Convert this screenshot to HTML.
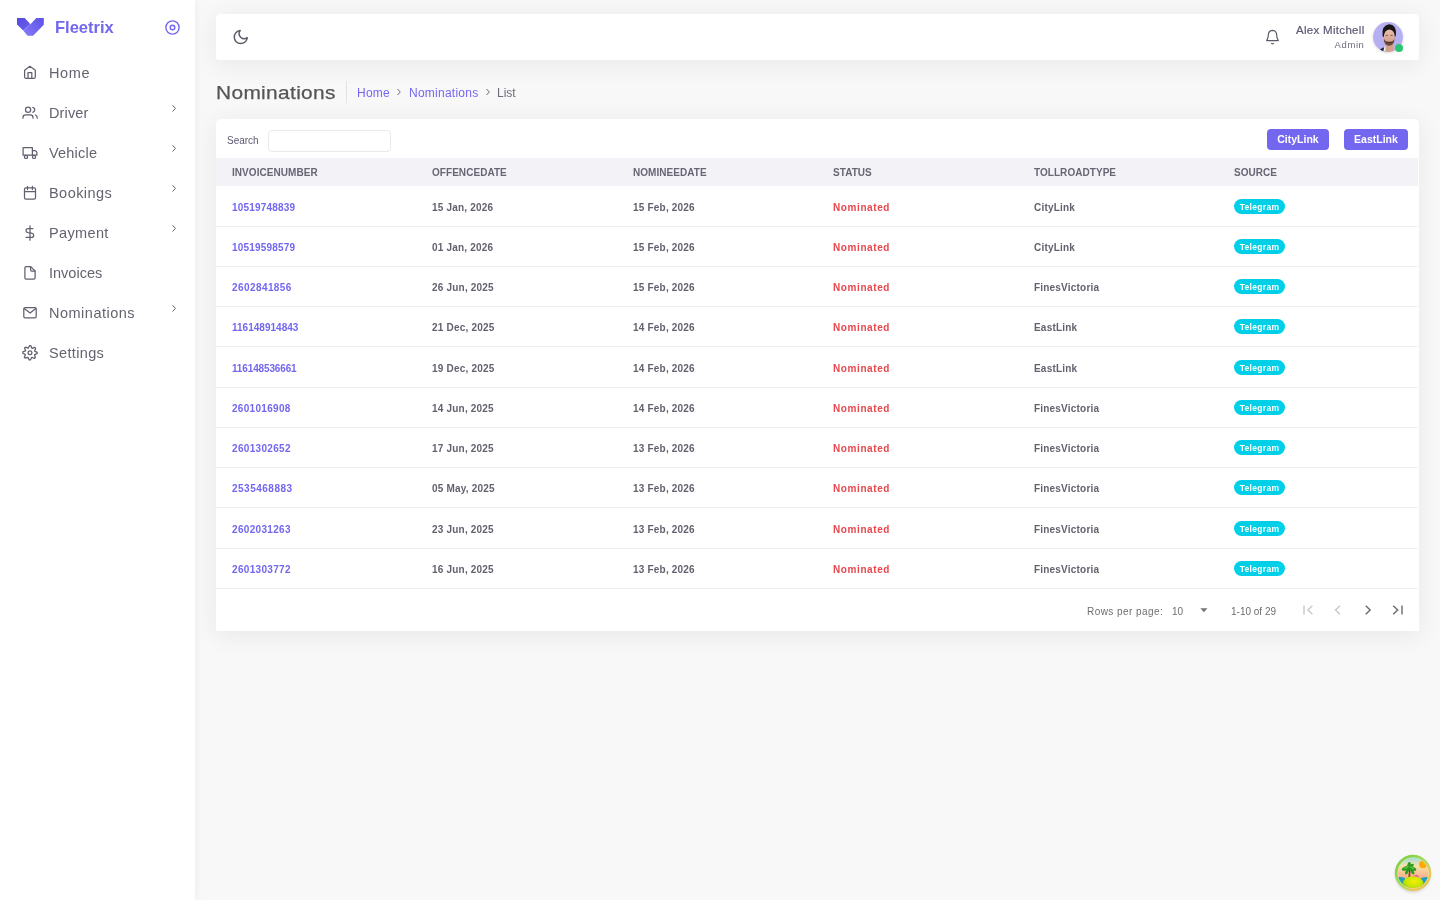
<!DOCTYPE html>
<html><head><meta charset="utf-8">
<style>
*{box-sizing:border-box;margin:0;padding:0}
html,body{width:1440px;height:900px;overflow:hidden}
html{-webkit-font-smoothing:antialiased}
body{will-change:transform}
body{font-family:"Liberation Sans",sans-serif;background:#f8f8f8;position:relative;color:#5e5873}
.abs{position:absolute}
#side{position:absolute;left:0;top:0;width:195px;height:900px;background:#fff;box-shadow:0 0 8px rgba(34,41,47,.06)}
.brand{position:absolute;left:55px;top:17.5px;font-size:16.5px;font-weight:bold;color:#7367f0;letter-spacing:0}
.nav{position:absolute;left:0;width:195px;height:40px}
.nav svg{position:absolute;left:22px;top:13px}
.nav span{position:absolute;left:49px;top:12.5px;font-size:14.5px;color:#66636f;letter-spacing:0.2px}
.nav i{position:absolute;left:171px;top:8px;width:5px;height:5px;border-right:1.2px solid #625f6e;border-top:1.2px solid #625f6e;transform:rotate(45deg)}
.card{position:absolute;background:#fff;border-radius:6px;box-shadow:0 4px 24px 0 rgba(34,41,47,.08)}
#hdr{left:216px;top:14px;width:1202.5px;height:46px;border-radius:5px 5px 3px 3px}
#tbl{left:216px;top:118.5px;width:1203px;height:512px;overflow:hidden;border-radius:5px 5px 0 0}
.title{position:absolute;left:216px;top:82px;font-size:19px;color:#555;letter-spacing:0.3px;-webkit-text-stroke:0.25px #555;transform:scaleX(1.1);transform-origin:0 0}
.vdiv{position:absolute;left:346px;top:81px;width:1px;height:22px;background:#e3e3e3}
.bc{position:absolute;top:86px;font-size:12px;color:#7367f0;letter-spacing:0.25px}
.bcs{position:absolute;top:86px;font-size:12px;color:#6e6b7b}
.srch{position:absolute;left:11px;top:16px;font-size:10px;color:#5e5873}
.inp{position:absolute;left:52px;top:11px;width:123px;height:22px;border:1px solid #eaeaee;border-radius:4px}
.th{position:absolute;top:39px;height:28px;left:0;width:1202px;background:#f3f2f7}
.th div{position:absolute;top:9.5px;font-size:10px;font-weight:bold;color:#686575;letter-spacing:0.05px}
.row{position:absolute;left:0;width:1202px;height:41px;border-bottom:1px solid #efeff1}
.row div{position:absolute;top:16.1px;font-size:10px;font-weight:bold;color:#64616f;letter-spacing:0.2px}
.row .inv{color:#7367f0}
.row .st{color:#e8484d;letter-spacing:0.6px}
.row .badge{top:13px;height:15px;width:51px;border-radius:8px;background:#00cfe8;color:#fff;font-size:8.5px;text-align:center;line-height:16.5px;letter-spacing:0.3px}
.btn{position:absolute;top:10.5px;height:21px;border-radius:4px;background:#7367f0;color:#fff;font-size:10.5px;font-weight:bold;text-align:center;line-height:21px}
.uname{position:absolute;right:54px;top:10px;font-size:11.5px;color:#5e5873;white-space:nowrap;letter-spacing:0.3px;-webkit-text-stroke:0.2px #5e5873}
.urole{position:absolute;right:54px;top:25px;font-size:9.5px;color:#6e6b7b;letter-spacing:0.6px}
.avatar{position:absolute;left:1157px;top:8px;width:30px;height:30px;border-radius:50%;box-shadow:0 1px 3px rgba(0,0,0,.15)}
.avatar svg{position:absolute;left:0;top:0}
.avatar i{position:absolute;left:22px;top:22px;width:8px;height:8px;border-radius:50%;background:#28c76f;border:0 solid #fff}
.ft{position:absolute;top:487px;font-size:10px;color:#6e6e6e}

</style></head><body>
<div id="side">
  <svg class="abs" style="left:0;top:0" width="50" height="40" viewBox="0 0 50 40">
    <defs><linearGradient id="lgL" x1="0" y1="0" x2="1" y2="1"><stop offset="0" stop-color="#5548e2"/><stop offset="1" stop-color="#6d61ea"/></linearGradient><linearGradient id="lgR" x1="0" y1="1" x2="1" y2="0"><stop offset="0" stop-color="#877bfa"/><stop offset="1" stop-color="#5d50e6"/></linearGradient></defs>
    <path d="M17 18H24.7L30.5 24.3L23.2 30.5L17 24.4Z" fill="url(#lgL)"/>
    <path d="M36.25 18H43.8V24.7L33.1 35.7H27.6L23.2 30.5L30.5 24.3Z" fill="url(#lgR)"/>
  </svg>
  <div class="brand">Fleetrix</div>
  <svg class="abs" style="left:165px;top:20px" width="15" height="15" viewBox="0 0 15 15"><circle cx="7.5" cy="7.5" r="6.6" fill="none" stroke="#7367f0" stroke-width="1.4"/><circle cx="7.5" cy="7.5" r="2.3" fill="none" stroke="#7367f0" stroke-width="1.4"/></svg>
<svg class="abs" style="left:0;top:0" width="195" height="400" viewBox="0 0 195 400" fill="none" stroke="#625f6e" stroke-width="1.25" stroke-linecap="round" stroke-linejoin="round">
<path d="M24.6 70.2L29.9 66.3L35.3 70.2V77.1Q35.3 78.3 34.1 78.3H25.8Q24.6 78.3 24.6 77.1Z"/><path d="M28 78.2V72.6H31.8V78.2"/>
<circle cx="28.1" cy="109.7" r="2.6"/><path d="M23 118.2V117.2Q23 114.9 25.6 114.9H30.4Q33 114.9 33 117.2V118.2"/><path d="M32.9 107.3Q34.8 108.1 34.8 109.8Q34.8 111.5 32.9 112.3"/><path d="M35.6 115Q37.3 115.9 37.3 118.2"/>
<path d="M23.1 147.5H32.4V155.2H23.1Z"/><path d="M32.4 150.6H35Q36.9 150.9 36.9 152.8V155.2H32.4"/><circle cx="26" cy="156.9" r="1.6" fill="#fff"/><circle cx="34" cy="156.9" r="1.6" fill="#fff"/>
<rect x="24.5" y="187.8" width="11" height="11.3" rx="1.4"/><path d="M27.5 186.4V189.5M32.4 186.4V189.5M24.5 191.5H35.5"/>
<path d="M32.9 228.6H28Q26 228.6 26 230.5Q26 232.4 28 232.7L31.6 233.1Q33.7 233.4 33.7 235.4Q33.7 237.4 31.6 237.4H26.1"/><path d="M30 225.8V240.2"/>
<path d="M30.6 266.6H26.1Q24.9 266.6 24.9 267.8V278Q24.9 279.1 26.1 279.1H33.9Q35.1 279.1 35.1 278V271Z"/><path d="M30.6 266.6V270.1Q30.6 271.1 31.6 271.1H35"/>
<rect x="23.8" y="307.6" width="12.4" height="10.3" rx="1.4"/><path d="M24.2 308.6L30.1 313.1L35.8 308.6"/>
<path d="M28.38 348.07 L29.57 345.61 L30.86 345.65 L31.90 348.18 L32.20 348.31 L34.78 347.41 L35.66 348.35 L34.61 350.87 L34.73 351.18 L37.19 352.37 L37.15 353.66 L34.62 354.70 L34.49 355.00 L35.39 357.58 L34.45 358.46 L31.93 357.41 L31.62 357.53 L30.43 359.99 L29.14 359.95 L28.10 357.42 L27.80 357.29 L25.22 358.19 L24.34 357.25 L25.39 354.73 L25.27 354.42 L22.81 353.23 L22.85 351.94 L25.38 350.90 L25.51 350.60 L24.61 348.02 L25.55 347.14 L28.07 348.19Z"/><circle cx="30" cy="352.7" r="1.9"/>
<path d="M172.8 105.6L175.5 108.4L172.8 111.2" stroke-width="1"/><path d="M172.8 145.6L175.5 148.4L172.8 151.2" stroke-width="1"/><path d="M172.8 185.6L175.5 188.4L172.8 191.2" stroke-width="1"/><path d="M172.8 225.6L175.5 228.4L172.8 231.2" stroke-width="1"/><path d="M172.8 305.6L175.5 308.4L172.8 311.2" stroke-width="1"/></svg><div class="nav" style="top:52px"><span style="letter-spacing:0.6px">Home</span></div>
<div class="nav" style="top:92px"><span style="letter-spacing:0.15px">Driver</span></div>
<div class="nav" style="top:132px"><span style="letter-spacing:0.2px">Vehicle</span></div>
<div class="nav" style="top:172px"><span style="letter-spacing:0.45px">Bookings</span></div>
<div class="nav" style="top:212px"><span style="letter-spacing:0.35px">Payment</span></div>
<div class="nav" style="top:252px"><span style="letter-spacing:0.0px">Invoices</span></div>
<div class="nav" style="top:292px"><span style="letter-spacing:0.5px">Nominations</span></div>
<div class="nav" style="top:332px"><span style="letter-spacing:0.35px">Settings</span></div>

</div>
<div class="card" id="hdr"><svg class="abs" style="left:0;top:0" width="60" height="46" viewBox="216 14 60 46" fill="none" stroke="#5d5a68" stroke-width="1.3" stroke-linecap="round" stroke-linejoin="round"><path transform="translate(232.05 28.4) scale(0.725)" stroke-width="2" d="M21 12.79A9 9 0 1 1 11.21 3 7 7 0 0 0 21 12.79z"/></svg>
<svg class="abs" style="left:1040px;top:0" width="80" height="46" viewBox="1256 14 80 46" fill="none" stroke="#5d5a68" stroke-width="1.2" stroke-linecap="round" stroke-linejoin="round"><path d="M1272.5 30.4Q1268.6 30.6 1268.3 35L1267.9 38L1266.7 40.6H1278.3L1277.1 38L1276.7 35Q1276.4 30.6 1272.5 30.4Z"/><path d="M1271.6 43.5Q1272.5 44.1 1273.4 43.5"/></svg>
<div class="uname">Alex Mitchell</div>
<div class="urole">Admin</div>
<div class="avatar"><svg width="30" height="30" viewBox="0 0 30 30"><defs><clipPath id="avc"><circle cx="15" cy="15" r="15"/></clipPath><linearGradient id="skin" x1="0" y1="0" x2="0" y2="1"><stop offset="0" stop-color="#ecc0ad"/><stop offset="1" stop-color="#cf9c86"/></linearGradient></defs><g clip-path="url(#avc)"><rect width="30" height="30" fill="#b6b0f3"/><path d="M3 31L8.5 26.5L11.5 25L12.5 31Z" fill="#1d2638"/><path d="M10 31L11.3 24.8L13.5 24L14 31Z" fill="#f2eeee"/><path d="M12.3 31L12.8 21.5H20L21.5 31Z" fill="#d4a28c"/><ellipse cx="16.2" cy="14.8" rx="5.6" ry="8.3" fill="url(#skin)"/><path d="M9.6 14Q8.2 3.5 16 2.2Q23.8 2.8 23 12.5L21.9 15.5Q21.8 8.2 16.4 7.6Q11.2 8 10.8 15.2Z" fill="#1a1514"/><path d="M10.8 16.5Q11 23.6 16.1 23.7Q21.2 23.6 21.6 16.5Q20.6 19.6 16.2 19.9Q11.8 19.6 10.8 16.5Z" fill="#6a4a3b"/><path d="M13.6 20.8Q16.2 19.6 18.8 20.8" stroke="#4a3028" stroke-width="1" fill="none"/><path d="M12.7 13.4H14.9M17.4 13.4H19.6" stroke="#6e5449" stroke-width="0.9"/></g></svg><i></i></div>
</div>
<div class="title">Nominations</div>
<div class="vdiv"></div>
<div class="bc" style="left:357px">Home</div>
<svg class="abs" style="left:396px;top:88px" width="6" height="8" viewBox="0 0 6 8"><path d="M1.5 1L4.3 4L1.5 7" fill="none" stroke="#6e6b7b" stroke-width="1"/></svg>
<div class="bc" style="left:409px">Nominations</div>
<svg class="abs" style="left:485px;top:88px" width="6" height="8" viewBox="0 0 6 8"><path d="M1.5 1L4.3 4L1.5 7" fill="none" stroke="#6e6b7b" stroke-width="1"/></svg>
<div class="bcs" style="left:497px">List</div>
<div class="card" id="tbl">
<div class="srch">Search</div><div class="inp"></div><div class="btn" style="left:1051px;width:62px">CityLink</div><div class="btn" style="left:1128px;width:64px">EastLink</div><div class="th"><div style="left:16px">INVOICENUMBER</div><div style="left:216px">OFFENCEDATE</div><div style="left:417px">NOMINEEDATE</div><div style="left:617px">STATUS</div><div style="left:818px">TOLLROADTYPE</div><div style="left:1018px">SOURCE</div></div>
<div class="row" style="top:67.0px"><div class="inv" style="left:16px;letter-spacing:0.2px">10519748839</div><div style="left:216px">15 Jan, 2026</div><div style="left:417px">15 Feb, 2026</div><div class="st" style="left:617px">Nominated</div><div style="left:818px">CityLink</div><div class="badge" style="left:1018px">Telegram</div></div>
<div class="row" style="top:107.25px"><div class="inv" style="left:16px;letter-spacing:0.2px">10519598579</div><div style="left:216px">01 Jan, 2026</div><div style="left:417px">15 Feb, 2026</div><div class="st" style="left:617px">Nominated</div><div style="left:818px">CityLink</div><div class="badge" style="left:1018px">Telegram</div></div>
<div class="row" style="top:147.5px"><div class="inv" style="left:16px;letter-spacing:0.42px">2602841856</div><div style="left:216px">26 Jun, 2025</div><div style="left:417px">15 Feb, 2026</div><div class="st" style="left:617px">Nominated</div><div style="left:818px">FinesVictoria</div><div class="badge" style="left:1018px">Telegram</div></div>
<div class="row" style="top:187.75px"><div class="inv" style="left:16px;letter-spacing:0.02px">116148914843</div><div style="left:216px">21 Dec, 2025</div><div style="left:417px">14 Feb, 2026</div><div class="st" style="left:617px">Nominated</div><div style="left:818px">EastLink</div><div class="badge" style="left:1018px">Telegram</div></div>
<div class="row" style="top:228.0px"><div class="inv" style="left:16px;letter-spacing:-0.14px">116148536661</div><div style="left:216px">19 Dec, 2025</div><div style="left:417px">14 Feb, 2026</div><div class="st" style="left:617px">Nominated</div><div style="left:818px">EastLink</div><div class="badge" style="left:1018px">Telegram</div></div>
<div class="row" style="top:268.25px"><div class="inv" style="left:16px;letter-spacing:0.3px">2601016908</div><div style="left:216px">14 Jun, 2025</div><div style="left:417px">14 Feb, 2026</div><div class="st" style="left:617px">Nominated</div><div style="left:818px">FinesVictoria</div><div class="badge" style="left:1018px">Telegram</div></div>
<div class="row" style="top:308.5px"><div class="inv" style="left:16px;letter-spacing:0.32px">2601302652</div><div style="left:216px">17 Jun, 2025</div><div style="left:417px">13 Feb, 2026</div><div class="st" style="left:617px">Nominated</div><div style="left:818px">FinesVictoria</div><div class="badge" style="left:1018px">Telegram</div></div>
<div class="row" style="top:348.75px"><div class="inv" style="left:16px;letter-spacing:0.5px">2535468883</div><div style="left:216px">05 May, 2025</div><div style="left:417px">13 Feb, 2026</div><div class="st" style="left:617px">Nominated</div><div style="left:818px">FinesVictoria</div><div class="badge" style="left:1018px">Telegram</div></div>
<div class="row" style="top:389.0px"><div class="inv" style="left:16px;letter-spacing:0.32px">2602031263</div><div style="left:216px">23 Jun, 2025</div><div style="left:417px">13 Feb, 2026</div><div class="st" style="left:617px">Nominated</div><div style="left:818px">FinesVictoria</div><div class="badge" style="left:1018px">Telegram</div></div>
<div class="row" style="top:429.25px"><div class="inv" style="left:16px;letter-spacing:0.32px">2601303772</div><div style="left:216px">16 Jun, 2025</div><div style="left:417px">13 Feb, 2026</div><div class="st" style="left:617px">Nominated</div><div style="left:818px">FinesVictoria</div><div class="badge" style="left:1018px">Telegram</div></div>
<div class="ft" style="left:871px;letter-spacing:0.45px">Rows per page:</div>
<div class="ft" style="left:956px">10</div>
<svg class="abs" style="left:984px;top:489px" width="8" height="5" viewBox="0 0 8 5"><path d="M0.3 0.3H7.5L3.9 4.2Z" fill="#757575"/></svg>
<div class="ft" style="left:1015px">1-10 of 29</div>
<svg class="abs" style="left:1080px;top:480px" width="122" height="22" viewBox="1296 599 122 22" fill="none" stroke-width="1.4" stroke-linecap="butt" stroke-linejoin="miter">
<path d="M1304 605.6V614.4" stroke="#c8c8c8"/><path d="M1312.4 605.8L1307.9 610L1312.4 614.2" stroke="#c8c8c8"/>
<path d="M1339.9 605.8L1335.5 610L1339.9 614.2" stroke="#c8c8c8"/>
<path d="M1365.7 605.8L1370.2 610L1365.7 614.2" stroke="#6a6a6a"/>
<path d="M1393.2 605.8L1397.7 610L1393.2 614.2" stroke="#6a6a6a"/><path d="M1402 605.6V614.4" stroke="#6a6a6a"/>
</svg>

</div>
<svg class="abs" style="left:1390px;top:850px" width="46" height="46" viewBox="0 0 46 46">
<defs>
<linearGradient id="ringg" x1="0" y1="0" x2="1" y2="1"><stop offset="0" stop-color="#6cc93a"/><stop offset="0.5" stop-color="#a8dc5a"/><stop offset="0.75" stop-color="#f3c35a"/><stop offset="1" stop-color="#b9dd2a"/></linearGradient>
<linearGradient id="sky" x1="0" y1="0" x2="0" y2="1"><stop offset="0" stop-color="#86d8f2"/><stop offset="0.3" stop-color="#f4e3a6"/><stop offset="0.6" stop-color="#fcb38e"/><stop offset="1" stop-color="#fb9d86"/></linearGradient>
<radialGradient id="hill" cx="0.55" cy="0.35" r="0.65"><stop offset="0" stop-color="#f2f000"/><stop offset="0.6" stop-color="#c8e400"/><stop offset="1" stop-color="#7cbf00"/></radialGradient>
<clipPath id="inner"><circle cx="23" cy="23" r="15.3"/></clipPath>
<filter id="bsh" x="-30%" y="-30%" width="160%" height="160%"><feGaussianBlur stdDeviation="1.5"/></filter>
<filter id="soft"><feGaussianBlur stdDeviation="0.35"/></filter>
</defs>
<circle cx="23" cy="25" r="17.5" fill="rgba(0,0,0,.14)" filter="url(#bsh)"/>
<g filter="url(#soft)">
<circle cx="23" cy="23" r="18.2" fill="url(#ringg)"/>
<g clip-path="url(#inner)">
<rect x="5" y="5" width="36" height="36" fill="url(#sky)"/>
<circle cx="33" cy="14.5" r="3.8" fill="#ffa800"/>
<path d="M5 27.5Q11 26.5 15 28V40H5Z" fill="#1b9fc0"/><path d="M31 28Q36 26.5 41 27.5V40H31Z" fill="#1b9fc0"/>
<path d="M18.2 28L19.3 17.5L20.5 17.8L20.3 28Z" fill="#7b4a1a"/>
<g fill="#2f9a24"><ellipse cx="15.8" cy="18.2" rx="4.2" ry="1.9" transform="rotate(-25 15.8 18.2)"/><ellipse cx="22.6" cy="18.4" rx="4" ry="1.8" transform="rotate(28 22.6 18.4)"/><ellipse cx="17.2" cy="21.2" rx="3.6" ry="1.5" transform="rotate(-65 17.2 21.2)"/><ellipse cx="22.2" cy="21.4" rx="3.4" ry="1.5" transform="rotate(60 22.2 21.4)"/><ellipse cx="19" cy="15.2" rx="3.2" ry="1.7" transform="rotate(-80 19 15.2)"/><ellipse cx="21.2" cy="15.8" rx="3" ry="1.5" transform="rotate(-30 21.2 15.8)"/></g><g fill="#56c23a"><ellipse cx="16.5" cy="17.4" rx="2.5" ry="0.9" transform="rotate(-25 16.5 17.4)"/><ellipse cx="22" cy="17.6" rx="2.4" ry="0.9" transform="rotate(28 22 17.6)"/></g>
<path d="M21.5 26.5L27 24.6L29.5 27.5Z" fill="#ef5fa0"/>
<ellipse cx="23" cy="33.5" rx="10.5" ry="7.2" fill="url(#hill)"/>
</g>
<circle cx="23" cy="23" r="15.6" fill="none" stroke="rgba(255,255,255,.35)" stroke-width="0.8"/>
</g>
</svg>

</body></html>
